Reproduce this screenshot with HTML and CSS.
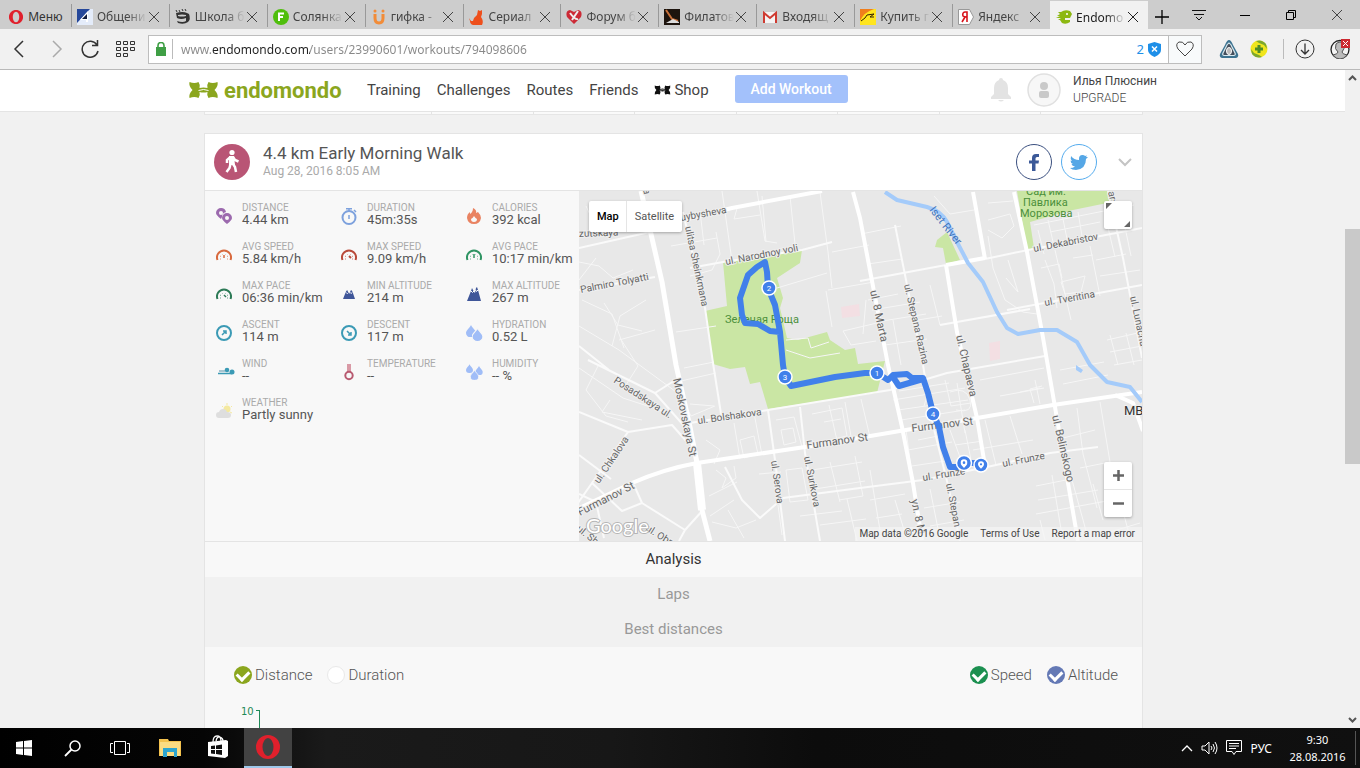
FILE: index.html
```html
<!DOCTYPE html>
<html lang="en">
  <head>
    <meta charset="UTF-8" />
    <meta name="viewport" content="width=device-width, initial-scale=1.0" />
    <title>Endomondo</title>
    <link rel="stylesheet" href="styles.css">
  </head>
  <body>
    <!-- shared symbols -->
    <svg class="symbols" aria-hidden="true">
      <symbol id="x" viewBox="0 0 12 12"><path d="M1 1l10 10M11 1L1 11" fill="none" stroke="currentColor" /></symbol>
      <symbol id="opera" viewBox="0 0 24 24"><path fill-rule="evenodd" d="M12 0a12 12 0 1 0 0 24 12 12 0 1 0 0-24zm0 3a5.500 9 0 1 1 0 18 5.500 9 0 1 1 0-18z" /></symbol>
      <symbol id="ua" viewBox="0 0 30 18"><path d="M1 1Q6 3 10 1q2 3 1 6 4-1 8 0-1-3 1-6 4 2 9 0 1 4-3 8 4 4 3 8-5-2-9 0-2-3-1-6-4 1-8 0 1 3-1 6-4-2-9 0-1-4 3-8-4-4-3-8z" /><path d="M10 9.500q5-2 10 0" fill="none" stroke="#fff" /></symbol>
      <symbol id="gauge" viewBox="0 0 16 16"><path d="M1.500 13A7 7 0 1 1 14.500 13" fill="none" stroke="currentColor" stroke-width="2" /><path d="M4 12h1M11 12h1M4 9l1 .5M12 9l-1 .5M6 7l.5.5M10 7l-.5.5" stroke="currentColor" opacity=".7" /></symbol>
      <symbol id="drop" viewBox="0 0 10 12"><path d="M5 0C6 3 10 5 10 8a4.500 4 0 0 1-10 0C0 5 4 3 5 0z" /></symbol>
      <symbol id="mtn" viewBox="0 0 16 12"><path d="M0 12L4 2l1.500-2L7 3l1.500 2L10 1l1-1 1.500 2L16 12z" /><path d="M4 3l1.500 2L7 4M9.500 3l1.500 2 1-2" fill="none" stroke="#fff" /></symbol>
      <symbol id="pin" viewBox="0 0 8 10"><path fill-rule="evenodd" d="M4 0a4 4 0 0 1 4 4c0 2.500-2.500 4-4 6C2.500 8 0 6.500 0 4a4 4 0 0 1 4-4zm0 2.500a1.500 1.500 0 1 0 0 3 1.500 1.500 0 0 0 0-3z" /></symbol>
    </svg>

    <div class="tabbar">
      <button class="menu"><svg class="fav red" viewBox="-1 -1 18 18"><use href="#opera" width="16" height="16" /></svg>Меню</button>
      <div class="tab"><svg class="fav" viewBox="0 0 16 16"><path fill="#e4ecfa" d="M0 0h16v16H0z" /><path fill="#26489a" d="M0 0h13L0 14z" /><path fill="#fff" d="M11 2v11H9v-2H3z" /><path fill="#111c3c" d="M5 10l5-5v5z" /></svg><span class="title">Общени</span><button class="close" aria-label="Close"><svg><use href="#x" /></svg></button></div>
      <div class="tab"><svg class="fav" viewBox="0 0 16 16"><path d="M1 1l1 2M4 1l1 2M7 0l1 2M10 0l1 2" stroke="#333" /><path fill="#333" d="M1 4q7-2 11 0l2 1q2 5-1 8-4 3-10 1l-1-2q6 2 9 0V9q-5 2-9 0z" /><path fill="#cdcdcd" d="M3 6q4-1 8 0v1q-4 1-8 0z" /></svg><span class="title">Школа б</span><button class="close" aria-label="Close"><svg><use href="#x" /></svg></button></div>
      <div class="tab"><svg class="fav" viewBox="0 0 16 16"><circle cx="8" cy="8" r="8" fill="#4fbe0c" /><path d="M6 12V4.500h5M6 8h4" fill="none" stroke="#fff" stroke-width="2" /></svg><span class="title">Солянка</span><button class="close" aria-label="Close"><svg><use href="#x" /></svg></button></div>
      <div class="tab"><svg class="fav" viewBox="0 0 16 16"><path d="M4 5v4q0 5 4 5t4-5V5" fill="none" stroke="#f28c38" stroke-width="3" /><circle cx="4" cy="2" r="1.500" fill="#f28c38" /><circle cx="12" cy="2" r="1.500" fill="#f28c38" /></svg><span class="title">гифка -</span><button class="close" aria-label="Close"><svg><use href="#x" /></svg></button></div>
      <div class="tab"><svg class="fav" viewBox="0 0 16 16"><path fill="#ee4f1c" d="M9 1l2 1 2-1v4l-1 3q3 4 1 8H4q-3-1-3-4l-1-3 2 3 2 0q1-4 4-6z" /></svg><span class="title">Сериал</span><button class="close" aria-label="Close"><svg><use href="#x" /></svg></button></div>
      <div class="tab"><svg class="fav" viewBox="0 0 16 16"><path fill="#cc2a36" d="M8 15L1 8Q-1 2 4 1l4 2 4-2q5 1 3 7z" /><path d="M4 4q5 7 8 6M12 2L6 11" fill="none" stroke="#eee" stroke-width="2" /></svg><span class="title">Форум б</span><button class="close" aria-label="Close"><svg><use href="#x" /></svg></button></div>
      <div class="tab"><svg class="fav" viewBox="0 0 16 16"><path fill="#1d140e" d="M0 0h16v16H0z" /><path d="M2 1l6 9 6 2" fill="none" stroke="#c9703a" stroke-width="2" /><path fill="#ddd" d="M2 14l7-4 6 3v1z" /></svg><span class="title">Филатов</span><button class="close" aria-label="Close"><svg><use href="#x" /></svg></button></div>
      <div class="tab"><svg class="fav" viewBox="0 0 16 16"><path fill="#f4f4f4" d="M1 3h14v11H1z" /><path d="M2 14V4l6 5 6-5v10" fill="none" stroke="#cf3b31" stroke-width="2" /></svg><span class="title">Входящ</span><button class="close" aria-label="Close"><svg><use href="#x" /></svg></button></div>
      <div class="tab"><svg class="fav" viewBox="0 0 16 16"><path fill="#ffe51e" d="M0 0h16v16H0z" /><path fill="#f07e1c" d="M0 0h14Q4 3 0 12z" /><path d="M1 12q5-3 6-6l7-1-4 3h4" fill="none" stroke="#332200" /></svg><span class="title">Купить г</span><button class="close" aria-label="Close"><svg><use href="#x" /></svg></button></div>
      <div class="tab"><svg class="fav" viewBox="0 0 16 16"><path fill="#fff" stroke="#999" d="M.5.5h11l4 7.500-4 7.500H.5z" /><path d="M9 13V3H7Q4 3.500 5 7q1 1 4 1M7 8l-3 5" fill="none" stroke="#d8141c" stroke-width="1.600" /></svg><span class="title">Яндекс</span><button class="close" aria-label="Close"><svg><use href="#x" /></svg></button></div>
      <div class="tab active"><svg class="fav" viewBox="0 0 16 16"><path fill="#8cb811" d="M2 3h3q4-3 9-1l2 3-2 4H9v2h5v2q-4 3-8 1l-2-3H2l3-2H0l4-2H1l3-2z" /><circle cx="11" cy="5" r="1" fill="#fff" /></svg><span class="title">Endomo</span><button class="close" aria-label="Close"><svg><use href="#x" /></svg></button></div>
      <button class="add" aria-label="New tab"><svg width="14" height="14"><path d="M7 0v14M0 7h14" stroke="#000" stroke-width="1.300" /></svg></button>
      <div class="window-buttons">
        <button aria-label="Tab menu"><svg width="14" height="12"><path d="M0 1.500h14M2 5.500h10M4 8l3 3 3-3" fill="none" stroke="#111" /></svg></button>
        <button aria-label="Minimize"><svg width="10" height="10"><path d="M0 5.500h10" stroke="#000" /></svg></button>
        <button aria-label="Restore"><svg width="10" height="10"><path d="M.5 2.500h7v7h-7zM2.500 2.500v-2h7v7h-2" fill="none" stroke="#000" /></svg></button>
        <button aria-label="Close window"><svg width="12" height="12"><use href="#x" /></svg></button>
      </div>
    </div>

    <div class="toolbar">
      <button class="tool" aria-label="Back"><svg width="12" height="18"><path d="M10 1L2 9l8 8" fill="none" stroke="#333" stroke-width="1.500" /></svg></button>
      <button class="tool" aria-label="Forward"><svg width="12" height="18"><path d="M2 1l8 8-8 8" fill="none" stroke="#aaa" stroke-width="1.500" /></svg></button>
      <button class="tool reload" aria-label="Reload"><svg width="18" height="18"><path d="M16 5a8 8 0 1 0 1 6M16.500 0v5.500H11" fill="none" stroke="#333" stroke-width="1.500" /></svg></button>
      <button class="tool speed" aria-label="Speed dial"><svg width="20" height="17"><path d="M.5.5h4v3h-4zM7.500.5h4v3h-4zM14.500.5h4v3h-4zM.5 6.500h4v3h-4zM7.500 6.500h4v3h-4zM14.500 6.500h4v3h-4zM.5 12.500h4v3h-4zM7.500 12.500h4v3h-4z" fill="none" stroke="#333" /></svg></button>
      <div class="address">
        <svg class="lock" width="10" height="14"><path fill="#3f9f45" d="M0 5h10v9H0z" /><path d="M2 6V3.500a3 3 0 0 1 6 0V6" fill="none" stroke="#3f9f45" stroke-width="1.600" /></svg>
        <input type="text" aria-label="Address" value="www.endomondo.com/users/23990601/workouts/794098606" />
        <span class="blocked">2</span>
        <svg class="shield" width="13" height="15"><path fill="#1e8fe8" d="M6.500 0L13 2v6q0 4-6.500 7Q0 12 0 8V2z" /><path d="M4 4.500l5 5M9 4.500l-5 5" stroke="#fff" stroke-width="1.500" /></svg>
        <button class="heart" aria-label="Bookmark"><svg width="18" height="16"><path d="M9 15L2 8Q-1 3 3 1q4-1 6 3 2-4 6-3 4 2 1 7z" fill="none" stroke="#444" /></svg></button>
      </div>
      <div class="extensions">
        <button aria-label="VPN"><svg width="20" height="20"><path d="M10 1q2 0 4 5l5 9q1 3-2 4H3q-3-1-2-4l5-9q2-5 4-5z" fill="#3d7390" /><path d="M10 4q2 1 3 4l3 6q1 2-1 2.500H5Q3 16 4 14l3-6q1-3 3-4z" fill="#454f5c" stroke="#d7e8ef" stroke-width="1.200" /><ellipse cx="10" cy="12" rx="2.500" ry="3.500" fill="#bbb" stroke="#fff" /></svg></button>
        <button aria-label="Saver"><svg width="18" height="18"><circle cx="9" cy="9" r="8.500" fill="#f0e51c" /><path d="M6 1q6-2 10 3l1 5-3-4-5-2zM12 17q-6 2-10-3L1 9l3 4 5 2z" fill="#7ba72e" /><path d="M9 5v8M5 9h8" stroke="#4d8a26" stroke-width="3" /></svg></button>
        <span class="divider"></span>
        <button aria-label="Downloads"><svg width="20" height="20"><circle cx="10" cy="10" r="9" fill="none" stroke="#333" /><path d="M10 4.500v10M6 11l4 4 4-4" fill="none" stroke="#333" stroke-width="1.300" /></svg></button>
        <button class="account" aria-label="Account"><svg width="21" height="20"><circle cx="10" cy="10.500" r="9" fill="#f4f4f4" stroke="#222" stroke-width="1.300" /><path d="M3 16q5-1 5-3-4-3-2-8 4-4 8 0 1 5-2 8 0 2 5 3-3 4-7 4t-7-4z" fill="#bbb" stroke="#555" /><path fill="#cc2930" d="M11 0h9v9h-9z" /><path d="M13 2l5 5M18 2l-5 5" stroke="#fff" /></svg></button>
      </div>
    </div>

    <div class="viewport">
      <div class="page">
        <header class="topbar">
          <div class="topbar-inner">
            <a class="logo" href="#"><svg width="31" height="18"><use href="#ua" /></svg>endomondo</a>
            <nav>
              <a href="#">Training</a>
              <a href="#">Challenges</a>
              <a href="#">Routes</a>
              <a href="#">Friends</a>
              <a href="#"><svg width="17" height="10" fill="#111"><use href="#ua" /></svg> Shop</a>
            </nav>
            <button class="add-workout">Add Workout</button>
            <svg class="bell" width="22" height="24"><path fill="#e3e3e3" d="M11 0q2 0 2 2 5 2 5 8v6l3 3v2H1v-2l3-3v-6q0-6 5-8 0-2 2-2zM8 22h6q-3 3-6 0z" /></svg>
            <svg class="avatar" width="34" height="34"><circle cx="17" cy="17" r="16" fill="#f7f7f7" stroke="#e0e0e0" stroke-width="1.500" /><circle cx="17" cy="13" r="4" fill="#c9c9c9" /><rect x="12" y="18" width="10" height="7" rx="2" fill="#c9c9c9" /></svg>
            <div class="user"><a href="#">Илья Плюснин</a><a href="#" class="upgrade">UPGRADE</a></div>
          </div>
        </header>

        <main>
          <div class="calendar"><i class="wide"></i><i></i><i></i><i></i><i></i><i></i><i></i><i></i></div>

          <section class="card">
            <div class="card-head">
              <svg class="sport" width="36" height="36"><circle cx="18" cy="18" r="18" fill="#b95575" /><circle cx="18" cy="8.500" r="2.600" fill="#fff" /><path d="M16.500 13l-3.500 3v3M17 13l1 7M19 13l2 3 3.500 1.500M16.500 20l-1 4-3 4M19 20l2 3 1 5" fill="none" stroke="#fff" stroke-width="2.500" /><path fill="#fff" d="M15 12h5l1 9h-6z" /></svg>
              <div class="headline"><h1>4.4 km Early Morning Walk</h1><p>Aug 28, 2016 8:05 AM</p></div>
              <button class="social fb" aria-label="Share on Facebook"><svg width="10" height="17"><path fill="#3b5998" d="M3 17V9.500H0V6.500h3V4q0-4 4-4h3v3H8Q6.500 3 6.500 4.500v2H10l-.5 3h-3V17z" /></svg></button>
              <button class="social tw" aria-label="Share on Twitter"><svg width="18" height="15"><path fill="#55a7e6" d="M18 2l-2 2q0 10-10 11-4 0-6-2 3 0 5-1.500-3-.5-3.500-2.500h1.500Q.5 8 .5 5.500l1.500.5Q0 4 1 1q3 4 8 4-.5-5 3.500-5Q14.500 0 15 1l2-.5L16 2z" /></svg></button>
              <button class="more" aria-label="More"><svg width="14" height="9"><path d="M1 1l6 6 6-6" fill="none" stroke="#c4c4c4" stroke-width="2" /></svg></button>
            </div>

            <div class="card-body">
              <ul class="stats">
                <li><svg viewBox="0 0 16 16" fill="#9c6aae"><path fill-rule="evenodd" d="M5 0a5 5 0 0 1 5 4Q6 5 6 9l-1 2Q0 7 0 5a5 5 0 0 1 5-5zm0 3a2 2 0 1 0 0 4 2 2 0 0 0 0-4z" /><path fill-rule="evenodd" d="M11 5a5 5 0 0 1 5 5q0 2-5 6-5-4-5-6a5 5 0 0 1 5-5zm0 3a2 2 0 1 0 0 4 2 2 0 0 0 0-4z" /></svg><p><b>DISTANCE</b>4.44 km</p></li>
                <li><svg viewBox="0 0 16 16"><circle cx="8" cy="9.500" r="6.500" fill="none" stroke="#7da1dd" stroke-width="2" /><path d="M5 .7h6M8 0v3M13 2l2 2M8 7v4" stroke="#7da1dd" stroke-width="1.500" /></svg><p><b>DURATION</b>45m:35s</p></li>
                <li><svg viewBox="0 0 16 16" fill="#e98362"><path fill-rule="evenodd" d="M7 0q4 2 3 5l2-1q3 3 3 6-1 6-7 6T1 10q0-4 3-6v2q3-2 3-6zm1 8q-1 2-3 3 0 3 3 3t3-3q-1 0-3-3z" /></svg><p><b>CALORIES</b>392 kcal</p></li>
                <li><svg color="#d8693d"><use href="#gauge" /><path d="M8 8v3" stroke="currentColor" stroke-width="1.500" /></svg><p><b>AVG SPEED</b>5.84 km/h</p></li>
                <li><svg color="#b94a3a"><use href="#gauge" /><path d="M8 9l2 2" stroke="currentColor" stroke-width="2" /></svg><p><b>MAX SPEED</b>9.09 km/h</p></li>
                <li><svg color="#2f9463"><use href="#gauge" /><path d="M8 7v4" stroke="currentColor" stroke-width="1.500" /></svg><p><b>AVG PACE</b>10:17 min/km</p></li>
                <li><svg color="#2c7a56"><use href="#gauge" /><path d="M8 9l2 2" stroke="currentColor" stroke-width="1.500" /></svg><p><b>MAX PACE</b>06:36 min/km</p></li>
                <li><svg fill="#3f5699"><use href="#mtn" x="2" y="4" width="12" height="9" /></svg><p><b>MIN ALTITUDE</b>214 m</p></li>
                <li><svg fill="#3f5699" viewBox="0 0 16 16"><path d="M1 15L5 5l1-3 2 4 1 1 1-5 1-1 1 3 3 11z" /><path d="M5 5l1.500 1.500L8 5M9.500 4l1 1.500L12 4" fill="none" stroke="#fff" /></svg><p><b>MAX ALTITUDE</b>267 m</p></li>
                <li><svg viewBox="0 0 16 16" fill="none" stroke="#3b9ab5" stroke-width="2"><circle cx="8" cy="8" r="7" /><path d="M6 10l3-3M7 6h3v3" stroke-width="1.500" /></svg><p><b>ASCENT</b>114 m</p></li>
                <li><svg viewBox="0 0 16 16" fill="none" stroke="#3b9ab5" stroke-width="2"><circle cx="8" cy="8" r="7" /><path d="M6 6l3 3M7 10h3V7" stroke-width="1.500" /></svg><p><b>DESCENT</b>117 m</p></li>
                <li><svg fill="#a0bdf7"><use href="#drop" width="10" height="12" /><use href="#drop" x="6" y="3" width="11" height="13" stroke="#f7f7f7" /></svg><p><b>HYDRATION</b>0.52 L</p></li>
                <li><svg viewBox="0 0 16 16"><path d="M3 7h6" stroke="#8db5c4" stroke-width="1.500" /><circle cx="11" cy="6" r="2.300" fill="#3b9ab5" /><circle cx="16" cy="8" r="2.500" fill="#3b9ab5" /><path d="M2 9.500h14" stroke="#3b9ab5" stroke-width="1.500" /></svg><p><b>WIND</b>--</p></li>
                <li><svg viewBox="0 0 16 16"><path d="M6 0h4v9H6z" fill="#d99aa6" /><circle cx="8" cy="11.500" r="3.700" fill="#f7f7f7" stroke="#b85a70" stroke-width="2" /></svg><p><b>TEMPERATURE</b>--</p></li>
                <li><svg fill="#a0bdf7"><use href="#drop" width="7" height="9" /><use href="#drop" x="9" y="2" width="8" height="9" /><use href="#drop" x="4" y="6" width="9" height="10" stroke="#f7f7f7" /></svg><p><b>HUMIDITY</b>-- %</p></li>
                <li><svg viewBox="0 0 16 16"><circle cx="11" cy="6" r="3.500" fill="#f4e9a0" /><path d="M11 0v2M6 3l1 1M16 3l-1 1M14 9l2 1" stroke="#f4e9a0" /><path fill="#dedede" d="M3 15a3 3 0 0 1 0-6q1-3 4-3t4 3q4 0 4 3t-3 3z" /></svg><p><b>WEATHER</b>Partly sunny</p></li>
              </ul>

              <div class="map">
                <svg class="map-canvas" viewBox="579 191 563 350" preserveAspectRatio="xMidYMid slice">
                  <path fill="#e8e8e8" d="M579 191h563v350H579z" />
                  <g class="park">
                    <path d="M723 262l79-12-2 13-23 15 6 20-3 10 7 30 11 2 29-8 3 8 15 10 10-2 3 16 27-3-8 32-17 2-92 14-8-27-10 2-5-17-15 2-17-5-8-53 22-5z" />
                    <path d="M947 232l13 28-14 4-3-16-8-1 2-7zM1017 191h96l-1 11-39 8-43 12 4 26-7 2z" />
                  </g>
                  <g fill="#f3dfe3"><path d="M841 307l18-3 1 12-18 2zM989 343l11-2v18l-10 2z" /></g>
                  <!-- side streets -->
                  <g class="lane">
                    <path d="M579 262l20 4 14 12 20-8M586 206l12 26M596 258l-17 22M582 300l30 14 12 34M604 303l14 22 24 6M579 326l40 24 60 44M620 338l18 28-14 22M646 300l-26 16-8 30M655 330l-36 10M579 368l44 30 46 15M598 366l-12 24 20 26 22 6M610 400l-8 12 40 8" />
                    <path d="M690 276l22-6 8-16-4-22M671 246l46-8M700 211l4 34M722 191l10 70M762 196l4 46M738 205l-4 14 26-4M676 332l40-6M684 368l30-6M672 383l44-10M690 404l24 2M681 396l10 20 24-10M757 191l8 50 12 2M790 196l5 48" />
                    <path d="M820 192l8 60 4 36M777 288l50-15M832 252l37-7M828 290l46-8M826 291l6 36M843 331l8 14 25-4M843 331l34-8M866 300l-3 34M740 440l14-4 4 18-14 4zM706 440l14 10-6 14M734 423l6 36M754 413l8 42M716 470l10 8-4 10 14-10-2-12" />
                    <path d="M786 340l22-2 3 10 18-6M786 350l24 8 30-5M776 420l18-3 8 30M781 430l12-2 3 14-12 3zM812 414l30-6 5 28-26 6M824 422l17-3M829 405l9 40M845 402l7 40M861 399l9 38M786 470l16-2 6 32-18 2zM812 470l50-8M815 489l50-8M855 456l8 40-24 4M830 462l10 40M847 499l10 42M870 470l10 60M800 516l42-5M820 525l46-6M778 505l4 30M756 520l-20 8-24-6M734 500l-24 16M728 510l16 28M709 496l28-14M759 474l22-2" />
                    <path d="M868 300l30-6M876 322l50-8M868 264l34-5M872 310l48-8M885 345l42-6M893 320l8 45M912 300l6 20 24-4M930 285l10 40M901 226l-40 8M899 391l50-8M893 400l72-12M898 410l70-10M901 420l64-10M930 386l-6 20M945 380l6 26 20-3M957 383l8 50M950 392q16-6 20 8t-14 10M906 430l7 52M918 440l20-4M908 450l44-8M912 466l40-6M950 430l14 38 24-5M955 445l28-4M965 430l6 30M973 450l60-10M985 420l11 45M1010 416l12 38" />
                    <path d="M988 203l25-2M988 220l22-6 4 12-12 12-14-8M988 236l5 32 12 32 18 12 14 2M1008 260l10 32M1018 292l-12-14M934 196l16 18 24-4M1034 225l100-20M1038 230l6 24M1048 220l6 26M1062 214l6 30M1078 212l4 24M1050 232l50-10M1045 260l9 24 3 24M1041 268l18-4 3 14M1055 250l16 70M1090 246l10 50M1061 282l24-6-4 16-16 2zM1073 258l20-3M1096 260l30-6M1100 276l40-6M1105 215l10 42M1122 213l9 43M1107 340l35-8M1110 352l32-6M1114 365l28-5M1110 335l8 30M1126 333l8 32" />
                    <path d="M1035 380l5 24M1042 386l-12 3 4 14M1020 392l20-4M1000 396l44-8M980 380l64-12M1063 384l45-9M1060 370l44-8M1100 402l13 78M1077 408l6 46 14 54M1063 438l32-8M1036 486l30-6M1038 500l60-10M1036 514l76-14M1052 475l10 60M1072 480l16 58M1093 484l10 36M1120 500l8 30M1080 468l30-6M1040 520l5 20M1100 535l40-12M870 500l35-6M876 518l26-4M930 489l10 50M895 500l12 40M924 508l36-6M930 526l34-6" />
                  </g>
                  <g class="street">
                    <path d="M579 248l71-16M683 212l22 96 8 55 9 57M723 262l-33 6M723 262l79-12 30-8M579 290l76-13M768 410l7 50 10 81M800 407l5 46 15 88M895 225l10 50 18 90 10 60 15 60 12 56" />
                    <path d="M860 281l86-16M985 259l43-9 114-22M1007 310l135-25M940 325l90-16M1108 191l15 67 19 100M690 423l78-13 122-20 57-17 98-17M783 498l77-10 63-8 64-13 63-14 48-6" />
                    <path d="M588 360l67 33 30 34M579 412l49 20 44-7 16 18M628 432l-36 51-14 20M579 455l32 24M592 483l30 28 20-8 43 27 18-20M642 503l-8-18M725 467l17 33 18 18 23-20M579 346l30 24M655 393l22-14M579 494l17 8 8 36M685 530l-6 11" />
                  </g>
                  <g class="road">
                    <path d="M641 191l10 43 11 48 14 83 14 62 7 36 5 47 8 31" stroke-width="5" />
                    <path d="M697 463l5 47" stroke-width="8" />
                    <path d="M575 510q30-14 57-27 32-14 65-20l108-16 172-29 76-13 89-13" />
                    <path d="M853 192l7 26 28 147 14 62 11 56 9 57M946 265l11 67 20 86 8 48M946 265l39-7M973 192l12 67M1014 192l13 60 15 80 13 75 13 76 10 58M1115 395l18 8 10 28M675 222l57-14 90-17" />
                  </g>
                  <path class="river" d="M885 192l12 8 30 7q14 4 20 15l10 20 11 21 15 19 14 30 10 16 11 6 22-4h17l20 12 13 23 17 17 23 5 12 15" />
                  <path fill="#a4cbfa" d="M1076 365l7 5-2 3-5-3z" />
                  <g class="label">
                    <text transform="translate(579 237) rotate(-2)">zutskaya</text>
                    <text transform="translate(681 221) rotate(-10)">uybysheva</text>
                    <text transform="translate(642 185) rotate(78)">ya</text>
                    <text transform="translate(685 227) rotate(78)">ulitsa Sheinkmana</text>
                    <text transform="translate(726 265) rotate(-11)">ul. Narodnoy voli</text>
                    <text transform="translate(581 293) rotate(-11)">Palmiro Tolyatti</text>
                    <text transform="translate(613 382) rotate(33)">Posadskaya ul.</text>
                    <text transform="translate(673 379) rotate(78)" class="main">Moskovskaya St</text>
                    <text transform="translate(698 424) rotate(-8)">ul. Bolshakova</text>
                    <text transform="translate(599 484) rotate(-56)">ul. Chkalova</text>
                    <text transform="translate(580 516) rotate(-27)" class="main">Furmanov St</text>
                    <text transform="translate(807 449) rotate(-8)" class="main">Furmanov St</text>
                    <text transform="translate(912 432) rotate(-7)" class="main">Furmanov St</text>
                    <text transform="translate(771 461) rotate(82)">ul. Serova</text>
                    <text transform="translate(804 457) rotate(79)">ul. Surikova</text>
                    <text transform="translate(576 530) rotate(38)">ul. Sha</text>
                    <text transform="translate(645 530) rotate(32)">ul. Obr</text>
                    <text transform="translate(870 291) rotate(78)" class="main">ul. 8 Marta</text>
                    <text transform="translate(904 285) rotate(77)">ul. Stepana Razina</text>
                    <text transform="translate(946 484) rotate(79)">ul. Stepan</text>
                    <text transform="translate(956 336) rotate(77)" class="main">ul. Chapaeva</text>
                    <text transform="translate(1034 252) rotate(-11)">ul. Dekabristov</text>
                    <text transform="translate(1045 306) rotate(-10)">ul. Tveritina</text>
                    <text transform="translate(1130 297) rotate(78)">ul. Lunacha</text>
                    <text transform="translate(1108 192) rotate(78)">ara</text>
                    <text transform="translate(1052 416) rotate(77)" class="main">ul. Belinskogo</text>
                    <text transform="translate(923 481) rotate(-9)">ul. Frunze</text>
                    <text transform="translate(1003 467) rotate(-11)">ul. Frunze</text>
                    <text transform="translate(911 500) rotate(78)" class="main">ул. 8 М</text>
                    <text x="1124" y="415" class="metro">МВ</text>
                    <text transform="translate(929 210) rotate(52)" class="water">Iset River</text>
                    <text x="725" y="323" class="green">Зеленая Роща</text>
                    <text x="1026" y="195" class="green">Сад им.</text>
                    <text x="1023" y="206" class="green">Павлика</text>
                    <text x="1020" y="217" class="green">Морозова</text>
                  </g>
                  <g class="route">
                    <path d="M877 373l-12 0-30 4-44 9-6-9-2-12-3-33-5-27-7-17-1-16-2-10-8 5-9 8-8 23 2 17 3 8 13 1 12 7 10 1" />
                    <path d="M877 373l11 7 5-5 14-1 5 4 11 0 5 15 5 20 6 14 4 20 7 20 7 0 7-5 17 2M893 377l6 9 24-7" />
                  </g>
                  <g class="marker">
                    <circle cx="769" cy="288" r="7" /><text x="769" y="291">2</text>
                    <circle cx="785" cy="377" r="7" /><text x="785" y="380">3</text>
                    <circle cx="877" cy="373" r="7" /><text x="877" y="376">1</text>
                    <circle cx="933" cy="414" r="7" /><text x="933" y="417">4</text>
                    <circle cx="981" cy="465" r="7" /><circle cx="964" cy="463" r="7.500" />
                  </g>
                  <g fill="#fff"><use href="#pin" x="978" y="461" width="6" height="8" /><use href="#pin" x="960.500" y="459" width="7" height="9" /></g>
                  <text x="586" y="533" class="google">Google</text>
                </svg>
                <div class="map-type"><button class="on">Map</button><button>Satellite</button></div>
                <button class="fullscreen" aria-label="Full screen"><svg width="28" height="28"><path fill="#666" d="M2 2h6L2 8zM26 26h-6l6-6z" /></svg></button>
                <div class="zoom">
                  <button aria-label="Zoom in"><svg width="11" height="11"><path d="M5.500 0v11M0 5.500h11" stroke="#666" stroke-width="2.500" /></svg></button>
                  <button aria-label="Zoom out"><svg width="11" height="11"><path d="M0 5.500h11" stroke="#666" stroke-width="2.500" /></svg></button>
                </div>
                <div class="legal"><span>Map data ©2016 Google</span><a href="#">Terms of Use</a><a href="#">Report a map error</a></div>
              </div>
            </div>

            <div class="sections">
              <button class="on">Analysis</button>
              <button>Laps</button>
              <button>Best distances</button>
            </div>

            <div class="chart-options">
              <label><input type="radio" name="axis" class="lime" checked />Distance</label>
              <label><input type="radio" name="axis" />Duration</label>
              <label class="push"><input type="checkbox" class="green-box" checked />Speed</label>
              <label><input type="checkbox" class="blue-box" checked />Altitude</label>
            </div>
            <div class="chart"><span>10</span><i></i></div>
          </section>
        </main>
      </div>
      <div class="scrollbar">
        <svg width="9" height="7"><path d="M1 5l3.500-3.500L8 5" fill="none" stroke="#555" stroke-width="2" /></svg>
        <div class="track"><div class="thumb"></div></div>
        <svg width="9" height="7"><path d="M1 1l3.500 3.500L8 1" fill="none" stroke="#555" stroke-width="2" /></svg>
      </div>
    </div>

    <div class="taskbar">
      <div class="pinned">
        <button aria-label="Start"><svg width="16" height="16" fill="#fff"><path d="M0 2l7-1v6.500H0zM8 1l8-1v7.500H8zM0 8.500h7V15l-7-1zM8 8.500h8V16l-8-1z" /></svg></button>
        <button aria-label="Search"><svg width="17" height="17"><circle cx="11" cy="6" r="5" fill="none" stroke="#fff" stroke-width="1.500" /><path d="M7.500 9.500L1 16" stroke="#fff" stroke-width="1.800" /></svg></button>
        <button aria-label="Task view"><svg width="20" height="16"><path d="M4.500 1.500h11v13h-11zM3 3.500H.5v9H3M17 3.500h2.500v9H17" fill="none" stroke="#fff" /></svg></button>
      </div>
      <div class="pinned">
        <button aria-label="Explorer"><svg width="22" height="20"><path fill="#f3c24e" d="M0 1h9l1 2h12v15H0z" /><path fill="#fbdc82" d="M1 4h20v14H1z" /><path fill="#2da5cf" d="M4 10h14v9h-3v-5H8v5H4z" /></svg></button>
        <button class="store" aria-label="Store"><svg width="22" height="24"><path fill="#fff" d="M1 7l18-2 2 1v15l-3 2-17-2z" /><path d="M6 7q0-6 4-6t4 5M9 6q1-5 4-4t3 4" fill="none" stroke="#fff" stroke-width="1.300" /><path fill="#111" d="M4 11l4-.5V14H4zM9 10.500l6-1V14H9zM4 15h4v4l-4-.5zM9 15h6v5l-6-1z" /></svg></button>
      </div>
      <button class="running" aria-label="Opera"><svg width="24" height="24" class="red"><use href="#opera" /></svg></button>
      <div class="tray">
        <svg width="12" height="8"><path d="M1 7l5-5 5 5" fill="none" stroke="#fff" stroke-width="1.300" /></svg>
        <svg width="17" height="14"><path d="M1 5h3l4-4v12L4 9H1zM10 5q2 2 0 4M12 3q3 4 0 8M14 1q4 6 0 12" fill="none" stroke="#fff" /></svg>
        <svg width="16" height="16"><path d="M.5.500h15v11H10l-2 3-2-3H.5zM3 3.500h10M3 6h10M3 8.500h7" fill="none" stroke="#fff" /></svg>
        <span class="lang">РУС</span>
        <div class="clock"><span>9:30</span><span>28.08.2016</span></div>
      </div>
    </div>
  </body>
</html>
```
FILE: styles.css
```css
* {
  margin: 0;
  padding: 0;
  box-sizing: border-box;
}

body {
  display: flex;
  flex-direction: column;
  height: 100vh;
  overflow: hidden;
  background: #f1f1f1;
  color: #555;
  font-family: Roboto, "Liberation Sans", sans-serif;
  font-size: 15px;
}

button {
  display: flex;
  align-items: center;
  justify-content: center;
  border: none;
  background: none;
  color: inherit;
  font: inherit;
}

a {
  color: inherit;
  text-decoration: none;
}

svg {
  display: block;
  flex: none;
}

.symbols {
  position: absolute;
  width: 0;
  height: 0;
}

.red {
  fill: #e0202c;
}

/* browser tabs */
.tabbar {
  display: flex;
  height: 29px;
  background: #cdcdcd;
  color: #444;
  font: 12px "Noto Sans", "Open Sans", sans-serif;
}

.fav {
  width: 16px;
  height: 16px;
}

.menu {
  width: 71px;
  gap: 4px;
  padding-top: 4px;
  color: #333;
}

.tab {
  display: flex;
  align-items: center;
  width: 98px;
  padding: 4px 9px 0 6px;
  background: linear-gradient(#999, #999) 0 4px / 1px 23px no-repeat;
}

.tab .title {
  flex: 1;
  margin: 0 1px 0 4px;
  overflow: hidden;
  white-space: nowrap;
  -webkit-mask-image: linear-gradient(90deg, #000 60%, transparent);
  mask-image: linear-gradient(90deg, #000 60%, transparent);
}

.tab .close,
.tab .close svg {
  width: 12px;
  height: 12px;
}

.tab.active {
  margin-top: 1px;
  background: #f1f1f1;
  color: #222;
}

.add {
  width: 28px;
  padding-top: 4px;
}

.window-buttons {
  display: flex;
  margin-left: auto;
}

.window-buttons button {
  width: 46px;
}

/* address bar */
.toolbar {
  display: flex;
  align-items: center;
  height: 41px;
  border-bottom: 1px solid #b9b9b9;
  background: #f1f1f1;
}

.tool {
  width: 38px;
  height: 30px;
}

.reload {
  width: 28px;
}

.speed {
  width: 44px;
}

.address {
  display: flex;
  flex: 1;
  align-items: center;
  height: 29px;
  border: 1px solid #bdbdbd;
  background: #fff;
  font: 13px "Noto Sans", "Open Sans", sans-serif;
}

.lock {
  margin: 0 6px 0 7px;
}

.address input {
  flex: 1;
  height: 20px;
  padding-left: 8px;
  border: none;
  border-left: 1px solid #bbb;
  outline: none;
  background: linear-gradient(90deg, #888 39px, #222 39px, #222 137px, #888 137px);
  -webkit-background-clip: text;
  background-clip: text;
  color: transparent;
  font: 12px "Noto Sans", "Open Sans", sans-serif;
}

.blocked {
  color: #1e8fe8;
}

.shield {
  margin: 0 7px 0 4px;
}

.heart {
  width: 33px;
  height: 27px;
  border-left: 1px solid #bdbdbd;
  background: #f8fafb;
}

.extensions {
  display: flex;
  align-items: center;
  padding: 0 5px 0 12px;
}

.extensions button {
  width: 30px;
}

.divider {
  width: 1px;
  height: 20px;
  margin: 0 6px 0 9px;
  background: #bbb;
}

.extensions .account {
  margin-left: 5px;
}

/* page */
.viewport {
  display: flex;
  flex: 1;
  min-height: 0;
}

.page {
  flex: 1;
  overflow: hidden;
}

.topbar {
  height: 42px;
  border-bottom: 1px solid #e4e4e4;
  background: #fff;
}

.topbar-inner {
  display: flex;
  align-items: center;
  max-width: 969px;
  height: 40px;
  margin: 0 auto;
  color: #444;
}

.logo {
  display: flex;
  align-items: center;
  gap: 5px;
  width: 179px;
  color: #8ba61e;
  fill: #8ba61e;
  font-size: 22px;
  font-weight: 700;
}

nav {
  display: flex;
  gap: 16px;
}

nav a {
  display: flex;
  align-items: center;
  gap: 3px;
}

.add-workout {
  width: 113px;
  height: 28px;
  margin: 0 auto 2px 26px;
  border-radius: 3px;
  background: #a3c1fb;
  color: #fff;
  font-size: 14px;
  font-weight: 500;
}

.avatar {
  margin: 0 12px 0 15px;
}

.user {
  display: flex;
  flex-direction: column;
  width: 84px;
  font-size: 12px;
  line-height: 17px;
  white-space: nowrap;
}

.upgrade {
  font-weight: 300;
}

main {
  max-width: 941px;
  margin: 0 auto;
  padding-left: 2px;
}

.calendar {
  display: flex;
  height: 3px;
  border: solid #e6e6e6;
  border-width: 0 0 1px 1px;
  background: #fafafa;
}

.calendar i {
  flex: 1;
  border-right: 1px solid #e4e4e4;
}

.calendar .wide {
  flex: none;
  width: 227px;
}

.card {
  margin-top: 18px;
  border: 1px solid #e4e4e4;
  background: #f8f8f8;
}

.card-head {
  display: flex;
  align-items: center;
  height: 57px;
  padding: 0 8px 0 9px;
  border-bottom: 1px solid #e4e4e4;
  background: #fff;
}

.headline {
  flex: 1;
  padding: 0 0 3px 13px;
}

.headline h1 {
  font-size: 17px;
  font-weight: 400;
  line-height: 20px;
}

.headline p {
  color: #aaa;
  font-size: 12px;
  line-height: 16px;
}

.social {
  width: 36px;
  height: 36px;
  margin-right: 9px;
  border: 1px solid #3b5080;
  border-radius: 50%;
}

.tw {
  border-color: #55acee;
}

.more {
  width: 18px;
  margin-left: 10px;
}

.card-body {
  display: flex;
  height: 351px;
  border-bottom: 1px solid #e4e4e4;
}

.stats {
  display: grid;
  grid-template-columns: repeat(3, 125px);
  grid-auto-rows: 39px;
  width: 374px;
  padding: 11px 0 0 11px;
  list-style: none;
  white-space: nowrap;
}

.stats li {
  display: flex;
  gap: 10px;
}

.stats svg {
  width: 16px;
  height: 16px;
  margin-top: 6px;
  overflow: visible;
}

.stats p {
  font-size: 13px;
  line-height: 12px;
}

.stats b {
  display: block;
  color: #aaa;
  font-size: 10px;
  font-weight: 400;
}

/* map */
.map {
  position: relative;
  flex: 1;
  overflow: hidden;
}

.map-canvas {
  width: 100%;
  height: 100%;
}

.park {
  fill: #cae6a4;
}

.lane,
.street,
.road,
.river,
.route {
  fill: none;
  stroke: #f6f6f6;
  stroke-linejoin: round;
}

.street {
  stroke: #fafafa;
  stroke-width: 2;
}

.road {
  stroke: #fff;
  stroke-width: 4;
}

.river {
  stroke: #a4cbfa;
  stroke-width: 4;
}

.route {
  stroke: #4180ea;
  stroke-width: 6;
}

.label {
  fill: #666;
  stroke: #efefef;
  stroke-width: 2;
  paint-order: stroke;
  font-size: 10px;
}

.label .main {
  font-size: 11px;
}

.label .green {
  fill: #4b8f3a;
  stroke: none;
  font-size: 11px;
}

.label .water {
  fill: #3f74bd;
  stroke: none;
  font-size: 11px;
}

.label .metro {
  fill: #333;
  font-size: 13px;
}

.marker {
  fill: #4180ea;
  stroke: #fff;
  stroke-width: 1.5;
}

.marker text {
  fill: #fff;
  stroke: none;
  font-size: 8px;
  text-anchor: middle;
}

.google {
  fill: #fff;
  stroke: #b5b5b5;
  stroke-width: 2;
  paint-order: stroke;
  font: 20px Lato, sans-serif;
}

.map-type,
.fullscreen,
.zoom {
  position: absolute;
  border-radius: 2px;
  background: #fff;
  box-shadow: 0 1px 3px rgba(0, 0, 0, 0.3);
}

.map-type {
  display: flex;
  top: 10px;
  left: 10px;
  height: 31px;
  font-size: 11px;
}

.map-type button {
  padding: 0 8px;
}

.map-type .on {
  padding-right: 7px;
  border-right: 1px solid #e5e5e5;
  color: #000;
  font-weight: 500;
}

.fullscreen {
  top: 10px;
  right: 10px;
  width: 28px;
  height: 28px;
}

.zoom {
  right: 10px;
  bottom: 24px;
  width: 28px;
}

.zoom button {
  width: 28px;
  height: 27px;
}

.zoom button + button {
  height: 28px;
  border-top: 1px solid #e5e5e5;
}

.legal {
  display: flex;
  position: absolute;
  right: 0;
  bottom: 0;
  gap: 12px;
  padding: 0 7px 0 4px;
  background: rgba(245, 245, 245, 0.7);
  color: #444;
  font-size: 10px;
  line-height: 14px;
}

/* analysis */
.sections button {
  width: 100%;
  height: 35px;
  padding-bottom: 2px;
  background: #f1f1f1;
  color: #999;
}

.sections .on {
  background: #f8f8f8;
  color: #333;
}

.chart-options {
  display: flex;
  gap: 15px;
  padding: 18px 24px 0 29px;
  font-weight: 300;
}

.chart-options label {
  display: flex;
  align-items: center;
  gap: 3px;
  height: 20px;
}

.chart-options .push {
  margin-left: auto;
}

.chart-options input {
  display: grid;
  place-items: center;
  width: 18px;
  height: 18px;
  border: 1px solid #e9e9e9;
  border-radius: 50%;
  background: #fff;
  appearance: none;
}

.chart-options input:checked {
  border: none;
}

.chart-options input:checked::before {
  content: "";
  width: 9px;
  height: 6px;
  margin-bottom: 2px;
  border: solid #fff;
  border-width: 0 0 3px 3px;
  transform: rotate(-45deg);
}

.chart-options .lime {
  background: #8ba61e;
}

.chart-options .green-box {
  background: #1c9050;
}

.chart-options .blue-box {
  background: #6479b5;
}

.chart {
  display: flex;
  gap: 2px;
  height: 120px;
  padding: 21px 0 0 36px;
  color: #1f8a57;
  font: 10px "DejaVu Sans", sans-serif;
}

.chart i {
  width: 4px;
  margin-top: 4px;
  border: solid #1f8a57;
  border-width: 1px 1px 0 0;
}

.scrollbar {
  display: flex;
  flex-direction: column;
  align-items: center;
  width: 15px;
  padding: 5px 0 4px;
  background: #f1f1f1;
}

.track {
  flex: 1;
  width: 100%;
}

.thumb {
  height: 37%;
  margin-top: 147px;
  background: #c9c9c9;
}

/* taskbar */
.taskbar {
  display: flex;
  gap: 2px;
  height: 40px;
  background: linear-gradient(90deg, #000, #050505 15%, #1a1a1a 24%, #171717 45%, #0c0c0c 60%, #101010);
  color: #fff;
  font: 12px "Noto Sans", "Open Sans", sans-serif;
}

.pinned {
  display: flex;
}

.taskbar button {
  width: 48px;
  height: 40px;
}

.taskbar .running {
  border-bottom: 2px solid #9ec8ea;
  background: #424242;
}

.taskbar .store {
  padding-bottom: 2px;
}

.tray {
  display: flex;
  align-items: center;
  gap: 8px;
  margin-left: auto;
  padding-right: 4px;
}

.clock {
  display: flex;
  flex-direction: column;
  align-items: center;
  width: 76px;
  border-right: 1px solid #555;
  font-size: 11px;
  line-height: 17px;
}
```
